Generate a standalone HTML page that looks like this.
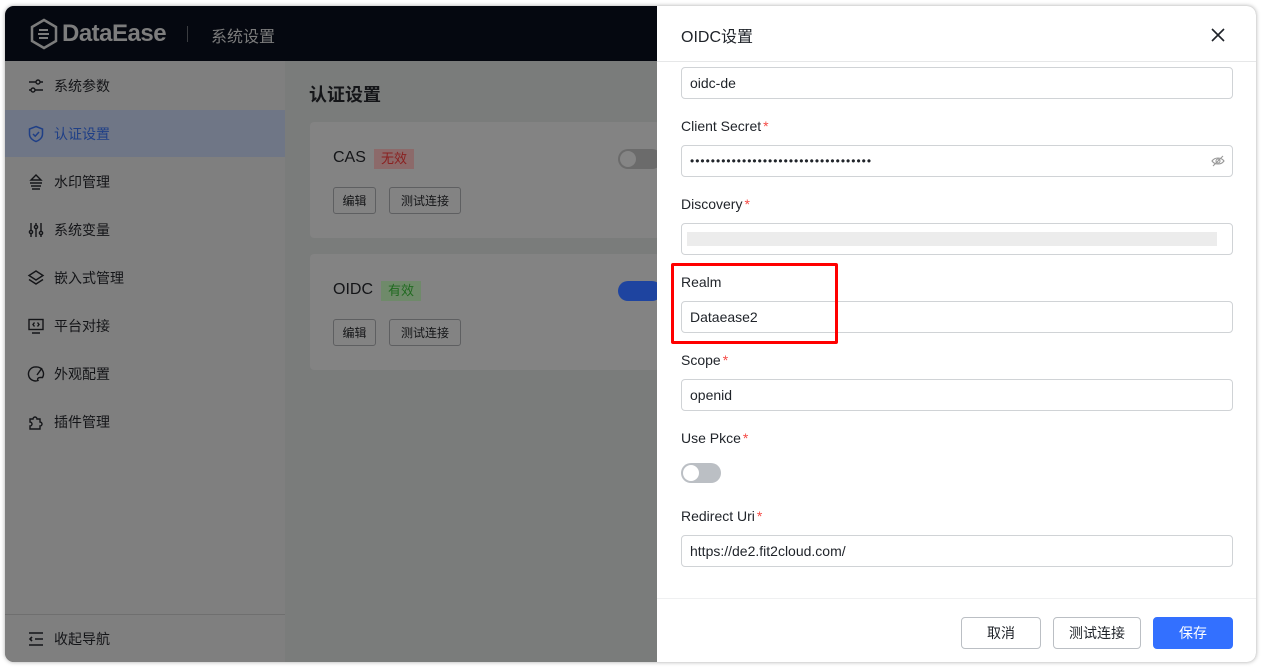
<!DOCTYPE html>
<html><head><meta charset="utf-8"><style>
*{box-sizing:border-box;margin:0;padding:0}
body{width:1262px;height:668px;background:#fff;position:relative;overflow:hidden;font-family:"Liberation Sans","Noto Sans CJK SC",sans-serif;}
.win{position:absolute;left:5px;top:6px;width:1251px;height:656px;border-radius:9px;overflow:hidden;background:#7a7c7b;box-shadow:0 0 4px rgba(0,0,0,.35)}
.hdr{position:absolute;left:0;top:0;width:652px;height:55px;background:#050810}
.side{position:absolute;left:0;top:55px;width:280px;height:601px;background:#7f7f7f}
.item{position:absolute;left:0;width:280px;height:47px;display:flex;align-items:center;padding-left:22px;font-size:14px;color:#141518}
.item svg{margin-right:9px}
.a{position:absolute}
.card{position:absolute;left:305px;width:350px;background:#838383;border-radius:4px}
.btn{position:absolute;height:27px;border:1px solid #5e5f61;border-radius:3px;font-size:12px;color:#151618;display:flex;align-items:center;justify-content:center}
.drawer{position:absolute;left:652px;top:0;width:599px;height:656px;background:#fff}
.lbl{position:absolute;left:24px;font-size:14px;color:#1f2329}
.lbl i{color:#f54a45;font-style:normal;margin-left:2px}
.inp{position:absolute;left:24px;width:552px;height:32px;border:1px solid #d0d3d6;border-radius:4px;font-size:14px;color:#1f2329;padding-left:8px;line-height:30px}
.fb{position:absolute;top:611px;height:32px;border:1px solid #bbbfc4;border-radius:4px;font-size:14px;color:#1f2329;display:flex;align-items:center;justify-content:center;background:#fff}
</style></head><body>
<div class="win">
 <div class="hdr">
  <svg class="a" style="left:24px;top:12px" width="30" height="32" viewBox="0 0 30 32"><path d="M15 2 L27 9 V23 L15 30 L3 23 V9 Z" fill="none" stroke="#7c7c7c" stroke-width="2.5"/><path d="M10 12h9M9 16h11M10 20h9" stroke="#7c7c7c" stroke-width="2"/></svg>
  <div class="a" style="left:57px;top:14px;font-size:24px;font-weight:bold;color:#7d7d7d;letter-spacing:-0.5px">DataEase</div>
  <div class="a" style="left:182px;top:20px;width:1px;height:16px;background:#3a3c40"></div>
  <div class="a" style="left:206px;top:17px;font-size:16px;color:#7c7c7c">系统设置</div>
 </div>
 <div class="side">
  <div class="item" style="top:1px"><svg width="18" height="18" viewBox="0 0 18 18" fill="none" stroke="#141518" stroke-width="1.4"><path d="M2 5h14M2 13h14"/><circle cx="11" cy="5" r="2" fill="#7f7f7f"/><circle cx="6" cy="13" r="2" fill="#7f7f7f"/></svg>系统参数</div>
  <div class="item" style="top:49px;background:#6f7686;color:#1f3f86"><svg width="18" height="18" viewBox="0 0 18 18" fill="none" stroke="#1f3f86" stroke-width="1.5"><path d="M9 1.5 L15.5 4 V9 C15.5 13 12 15.5 9 16.5 C6 15.5 2.5 13 2.5 9 V4 Z"/><path d="M6 9l2.2 2.2L12 7"/></svg>认证设置</div>
  <div class="item" style="top:97px"><svg width="18" height="18" viewBox="0 0 18 18" fill="none" stroke="#141518" stroke-width="1.4"><path d="M9 2 L14 7 H4 Z M3 10h12 M4 13h10 M5 16h8"/></svg>水印管理</div>
  <div class="item" style="top:145px"><svg width="18" height="18" viewBox="0 0 18 18" fill="none" stroke="#141518" stroke-width="1.4"><path d="M4 2v14M9 2v14M14 2v14"/><circle cx="4" cy="11" r="1.6" fill="#7f7f7f"/><circle cx="9" cy="6" r="1.6" fill="#7f7f7f"/><circle cx="14" cy="12" r="1.6" fill="#7f7f7f"/></svg>系统变量</div>
  <div class="item" style="top:193px"><svg width="18" height="18" viewBox="0 0 18 18" fill="none" stroke="#141518" stroke-width="1.4"><path d="M9 2 L16 6.5 L9 11 L2 6.5 Z M2 10.5 L9 15 L16 10.5"/></svg>嵌入式管理</div>
  <div class="item" style="top:241px"><svg width="18" height="18" viewBox="0 0 18 18" fill="none" stroke="#141518" stroke-width="1.4"><rect x="2" y="2.5" width="14" height="10"/><path d="M5 16h8M7.5 5.5l-1.5 2 1.5 2M10.5 5.5l1.5 2-1.5 2"/></svg>平台对接</div>
  <div class="item" style="top:289px"><svg width="18" height="18" viewBox="0 0 18 18" fill="none" stroke="#141518" stroke-width="1.4"><path d="M9 2a7 7 0 1 0 2 13.5c-1-1.5 0-3 2-3h2.5A7 7 0 0 0 9 2z"/><path d="M10 10l5-7"/></svg>外观配置</div>
  <div class="item" style="top:337px"><svg width="18" height="18" viewBox="0 0 18 18" fill="none" stroke="#141518" stroke-width="1.4"><path d="M3 6h3a2 2 0 1 1 4 0h3v3a2 2 0 1 1 0 4v3H3v-3a2 2 0 1 0 0-4z"/></svg>插件管理</div>
  <div class="a" style="left:0;top:553px;width:280px;height:1px;background:#6f6f6f"></div>
  <div class="item" style="top:554px;height:47px"><svg width="18" height="18" viewBox="0 0 18 18" fill="none" stroke="#141518" stroke-width="1.6"><path d="M2 3h14M8 9h8M2 15h14M5 7l-2 2 2 2"/></svg>收起导航</div>
 </div>
 <div class="a" style="left:304px;top:75px;font-size:18px;font-weight:bold;color:#141518">认证设置</div>
 <div class="card" style="top:116px;height:116px">
  <div class="a" style="left:23px;top:27px;font-size:16px;color:#141518">CAS</div>
  <div class="a" style="left:64px;top:27px;width:40px;height:20px;background:#8c6a6a;color:#8a2020;font-size:13px;text-align:center;line-height:20px">无效</div>
  <div class="a" style="left:308px;top:27px;width:44px;height:20px;border-radius:10px;background:#6b6b6b"><div class="a" style="left:2px;top:2px;width:16px;height:16px;border-radius:50%;background:#858585"></div></div>
  <div class="btn" style="left:23px;top:65px;width:43px">编辑</div>
  <div class="btn" style="left:79px;top:65px;width:72px">测试连接</div>
 </div>
 <div class="card" style="top:248px;height:116px">
  <div class="a" style="left:23px;top:27px;font-size:16px;color:#141518">OIDC</div>
  <div class="a" style="left:71px;top:27px;width:40px;height:20px;background:#6f8a6a;color:#206a20;font-size:13px;text-align:center;line-height:20px">有效</div>
  <div class="a" style="left:308px;top:27px;width:44px;height:20px;border-radius:10px;background:#1e44a0"></div>
  <div class="btn" style="left:23px;top:65px;width:43px">编辑</div>
  <div class="btn" style="left:79px;top:65px;width:72px">测试连接</div>
 </div>
 <div class="drawer">
  <div class="a" style="left:24px;top:17px;font-size:16px;color:#1f2329">OIDC设置</div>
  <svg class="a" style="left:554px;top:22px" width="14" height="14" viewBox="0 0 14 14" stroke="#1f2329" stroke-width="1.6"><path d="M1 1l12 12M13 1L1 13"/></svg>
  <div class="a" style="left:0;top:55px;width:599px;height:1px;background:#e6e7e8"></div>
  <div class="inp" style="top:61px">oidc-de</div>
  <div class="lbl" style="top:112px">Client Secret<i>*</i></div>
  <div class="inp" style="top:139px;letter-spacing:1px;font-size:12px">•••••••••••••••••••••••••••••••••••</div>
  <svg class="a" style="left:554px;top:148px" width="14" height="14" viewBox="0 0 14 14" fill="none" stroke="#999" stroke-width="1.1"><path d="M1 7c3-4 9-4 12 0c-3 4-9 4-12 0z"/><circle cx="7" cy="7" r="2"/><path d="M2 12L12 2"/></svg>
  <div class="lbl" style="top:190px">Discovery<i>*</i></div>
  <div class="inp" style="top:217px"><div class="a" style="left:5px;top:8px;width:530px;height:14px;background:#ececec"></div></div>
  <div class="lbl" style="top:268px">Realm</div>
  <div class="inp" style="top:295px">Dataease2</div>
  <div class="a" style="left:14px;top:257px;width:167px;height:81px;border:3px solid #f00;border-radius:2px"></div>
  <div class="lbl" style="top:346px">Scope<i>*</i></div>
  <div class="inp" style="top:373px">openid</div>
  <div class="lbl" style="top:424px">Use Pkce<i>*</i></div>
  <div class="a" style="left:24px;top:457px;width:40px;height:20px;border-radius:10px;background:#bbbfc4"><div class="a" style="left:2px;top:2px;width:16px;height:16px;border-radius:50%;background:#fff"></div></div>
  <div class="lbl" style="top:502px">Redirect Uri<i>*</i></div>
  <div class="inp" style="top:529px">https://de2.fit2cloud.com/</div>
  <div class="a" style="left:0;top:592px;width:599px;height:1px;background:#eff0f1"></div>
  <div class="fb" style="left:304px;width:80px">取消</div>
  <div class="fb" style="left:396px;width:88px">测试连接</div>
  <div class="fb" style="left:496px;width:80px;background:#3370ff;border-color:#3370ff;color:#fff">保存</div>
 </div>
</div>
</body></html>
